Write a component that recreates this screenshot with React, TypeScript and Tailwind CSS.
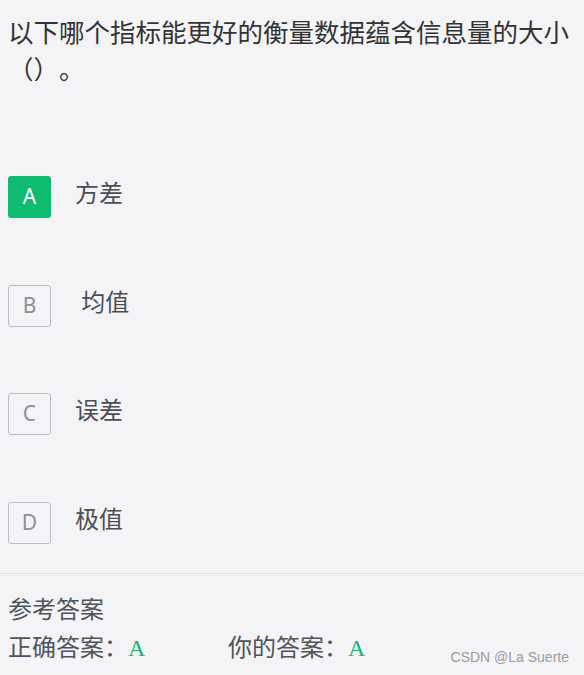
const options = [
  { key: 'A', text: '方差', selected: true },
  { key: 'B', text: ' 均值', selected: false },
  { key: 'C', text: '误差', selected: false },
  { key: 'D', text: '极值', selected: false },
]

const cjk = { fontFamily: '"Noto Sans", "Noto Sans CJK SC", sans-serif' }

export default function App() {
  return (
    <div className="relative min-h-[675px] w-[584px] bg-[#f4f4f7] overflow-hidden" style={cjk}>
      {/* 题目 */}
      <div
        className="pl-2 pr-1 pt-3 text-[25.5px] leading-[37px] text-[#333333] [text-spacing-trim:space-all]"
        style={{ fontFamily: '"Noto Sans CJK SC", sans-serif' }}
      >
        以下哪个指标能更好的衡量数据蕴含信息量的大小（）。
      </div>

      {/* 选项 */}
      <div className="mt-[90px] flex flex-col gap-[66.5px] pl-2">
        {options.map((opt) => (
          <div key={opt.key} className="flex items-start h-[42px]">
            <div
              className={`flex h-[42px] w-[43px] items-center justify-center rounded-[3px] text-[21px] ${
                opt.selected
                  ? 'bg-[#0dbc71] text-white'
                  : 'border border-[#b9bdc5] text-[#8b9099]'
              }`}
            >
              {opt.key}
            </div>
            <span className="ml-[24px] whitespace-pre text-[24px] leading-[33px] text-[#4a4e57]">
              {opt.text}
            </span>
          </div>
        ))}
      </div>

      {/* 参考答案 */}
      <div className="mt-[29px] border-t border-[#e2e2e9] pt-[16px] pl-2 text-[24px] leading-[38px] text-[#4f535c]">
        <div className="h-px -mt-[15px] mb-[14px] bg-[#ebebf0] -ml-2" />
        <div>参考答案</div>
        <div className="flex">
          <div className="w-[220px]">
            正确答案：
            <span className="text-[#12b872]" style={{ fontFamily: '"Liberation Serif", serif' }}>A</span>
          </div>
          <div>
            你的答案：
            <span className="text-[#12b872]" style={{ fontFamily: '"Liberation Serif", serif' }}>A</span>
          </div>
        </div>
      </div>

      <div
        className="absolute right-[15px] bottom-[7px] text-[14px] text-[#9b9b9b]"
        style={{ fontFamily: '"Liberation Sans", Arial, sans-serif' }}
      >
        CSDN @La Suerte
      </div>
    </div>
  )
}
